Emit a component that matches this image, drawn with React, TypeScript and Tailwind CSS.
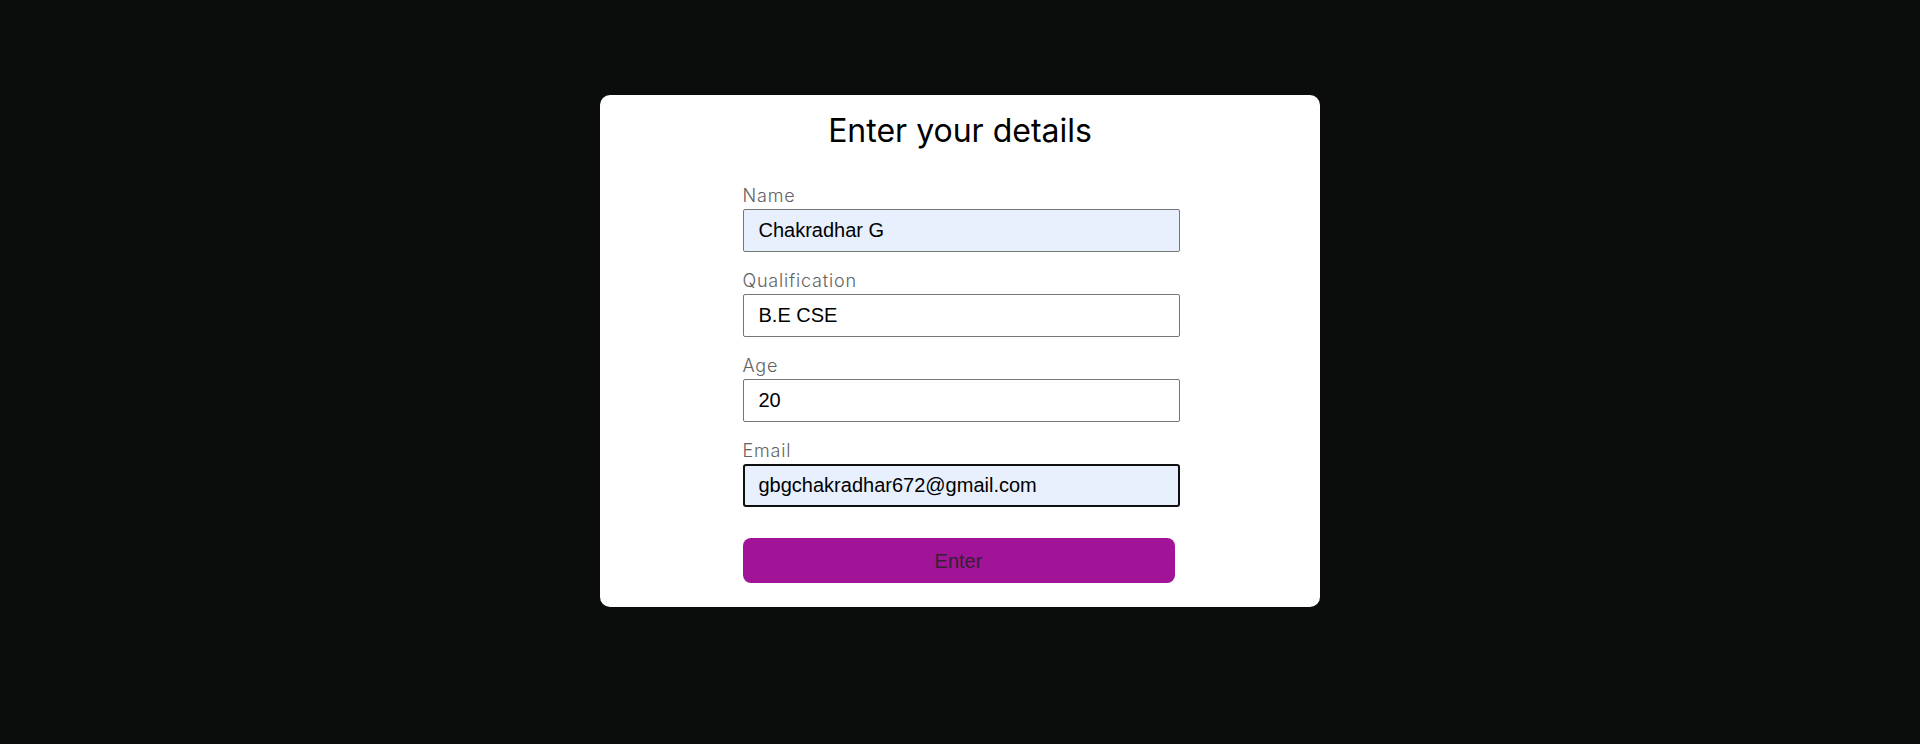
const fields = [
  { label: "Name", value: "Chakradhar G", autofill: true, focused: false },
  { label: "Qualification", value: "B.E CSE", autofill: false, focused: false },
  { label: "Age", value: "20", autofill: false, focused: false },
  { label: "Email", value: "gbgchakradhar672@gmail.com", autofill: true, focused: true },
];

export default function App() {
  return (
    <div className="min-h-[744px] w-full bg-[#0b0c0c] pt-[95px] font-['Liberation_Sans',Arial,sans-serif]">
      {/* Card */}
      <div className="mx-auto w-[720px] rounded-[10px] bg-white pt-[12px] pb-[24px]">
        <h1 className="text-center font-['Inter',sans-serif] text-[32px] leading-[48px] font-normal text-black">
          Enter your details
        </h1>

        <form className="mx-auto mt-[29px] w-[437px] pl-[1px]" onSubmit={(e) => e.preventDefault()}>
          {fields.map((f) => (
            <div key={f.label} className="mb-[17px]">
              <label className="block font-['Inter',sans-serif] text-[18px] leading-[24px] font-light tracking-[0.8px] text-[#626262]">
                {f.label}
              </label>
              <input
                defaultValue={f.value}
                className={
                  f.focused
                    ? "mt-[1px] box-border block h-[43px] w-[437px] rounded-[3px] border-2 border-[#101010] bg-[#e8f0fe] pl-[14px] text-[20px] text-black outline-none"
                    : f.autofill
                    ? "mt-[1px] box-border block h-[43px] w-[437px] rounded-[2px] border border-[#767676] bg-[#e8f0fe] pl-[15px] text-[20px] text-black outline-none"
                    : "mt-[1px] box-border block h-[43px] w-[437px] rounded-[2px] border border-[#767676] bg-white pl-[15px] text-[20px] text-black outline-none"
                }
              />
            </div>
          ))}

          <button
            type="submit"
            className="mt-[31px] block h-[45px] w-[432px] rounded-[8px] bg-[#a11497] text-[20px] text-[#36202f]"
          >
            Enter
          </button>
        </form>
      </div>
    </div>
  );
}
